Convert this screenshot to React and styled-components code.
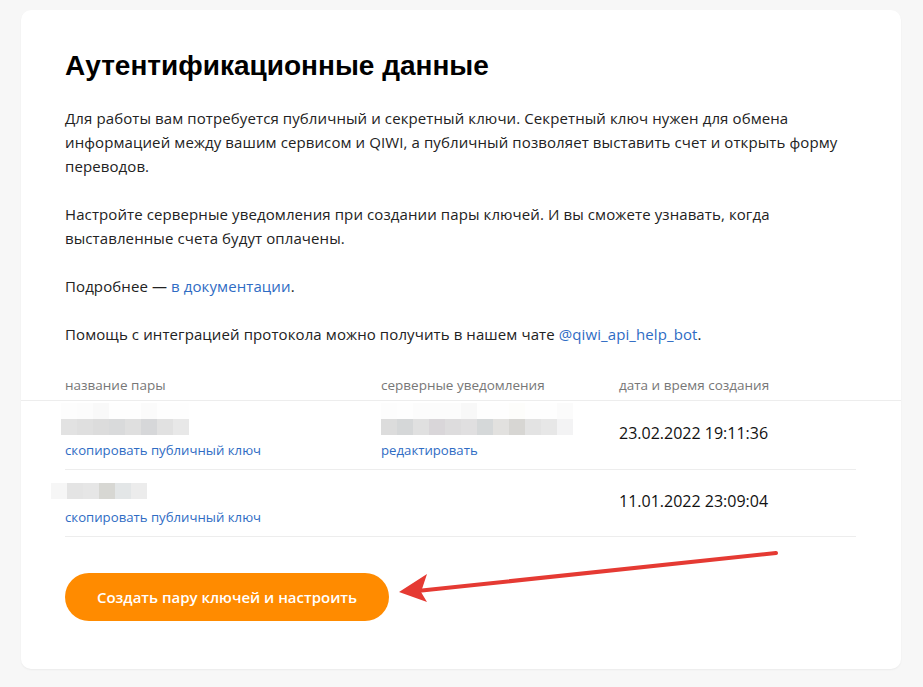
import React from "react";
import styled, { createGlobalStyle } from "styled-components";

const Global = createGlobalStyle`
  html, body { margin: 0; padding: 0; background: #f7f7f7; }
  body { font-family: "Open Sans", "Noto Sans", sans-serif; color: #1f1f1f; }
  * { box-sizing: border-box; }
`;

const Page = styled.div`
  padding: 10px 22px 18px 21px;
`;

const Card = styled.section`
  position: relative;
  background: #fff;
  border-radius: 10px;
  box-shadow: 0 1px 2px rgba(0,0,0,0.05);
  padding: 40px 0 47px;
  width: 880px;
  height: 659px;
`;

const Inner = styled.div`
  padding: 0 45px 0 44px;
`;

const Title = styled.h1`
  margin: 0 0 24px;
  font-family: "Liberation Sans", Arial, sans-serif;
  font-weight: 700;
  font-size: 28px;
  line-height: 32px;
  color: #000;
`;

const Text = styled.p`
  margin: 0 0 24px;
  font-size: 15px;
  line-height: 24px;
  color: #222;
  letter-spacing: 0.1px;
`;

const Link = styled.a`
  color: #2f6cc4;
  text-decoration: none;
`;

const HeadRow = styled.div`
  display: grid;
  grid-template-columns: 316px 238px 1fr;
  padding: 0 45px 0 44px;
  height: 31px;
  align-items: center;
  border-bottom: 1px solid #ededed;
`;

const HeadCell = styled.div`
  font-size: 13.5px;
  color: #777;
`;

const Rows = styled.div`
  padding: 0 45px 0 44px;
`;

const Row = styled.div`
  display: grid;
  grid-template-columns: 316px 238px 1fr;
  height: ${p => p.$h}px;
  border-bottom: 1px solid #ededed;
`;

const Cell = styled.div`
  display: flex;
  flex-direction: column;
  padding-top: ${p => p.$pt || 0}px;
`;

const DateCell = styled.div`
  display: flex;
  align-items: center;
  font-size: 16px;
  color: #111;
  padding-bottom: ${p => p.$pb || 0}px;
`;

const Pixels = styled.div`
  display: flex;
  margin-left: ${p => p.$ml || 0}px;
`;

const Px = styled.span`
  width: 16px;
  height: 16px;
  background: ${p => p.$c};
`;

const SmallLink = styled(Link)`
  font-size: 13.2px;
  line-height: 16px;
  margin-top: ${p => p.$mt || 0}px;
`;

const Footer = styled.div`
  padding: 36px 45px 0 44px;
`;

const Button = styled.button`
  height: 48px;
  width: 324px;
  border: none;
  border-radius: 24px;
  background: #ff8b00;
  color: #fff;
  font-family: "Open Sans", sans-serif;
  font-weight: 600;
  font-size: 15px;
  cursor: pointer;
`;

const Arrow = styled.svg`
  position: absolute;
  left: 0;
  top: 0;
  pointer-events: none;
`;

function PixelRow({ colors, ml }) {
  return (
    <Pixels $ml={ml}>
      {colors.map((c, i) => <Px key={i} $c={c} />)}
    </Pixels>
  );
}

export default function App() {
  return (
    <>
      <Global />
      <Page>
        <Card>
          <Inner>
            <Title>Аутентификационные данные</Title>
            <Text>
              Для работы вам потребуется публичный и секретный ключи. Секретный ключ нужен для обмена информацией между вашим сервисом и QIWI, а публичный позволяет выставить счет и открыть форму переводов.
            </Text>
            <Text>
              Настройте серверные уведомления при создании пары ключей. И вы сможете узнавать, когда выставленные счета будут оплачены.
            </Text>
            <Text>
              Подробнее — <Link href="#">в документации</Link>.
            </Text>
            <Text>
              Помощь с интеграцией протокола можно получить в нашем чате <Link href="#">@qiwi_api_help_bot</Link>.
            </Text>
          </Inner>
          <HeadRow>
            <HeadCell>название пары</HeadCell>
            <HeadCell>серверные уведомления</HeadCell>
            <HeadCell>дата и время создания</HeadCell>
          </HeadRow>
          <Rows>
            <Row $h={69}>
              <Cell $pt={2}>
                <PixelRow ml={-4} colors={["#fdfdfd", "#fcfcfc", "#f9f9f9", "#fefefe", "#fefefe", "#fbfbfb", "#fefefe", "#fefefe"]} />
                <PixelRow ml={-4} colors={["#e2e2e2", "#dfdfdf", "#dcdcdc", "#d9dadb", "#dfdfdf", "#d6d7d9", "#e1e1e1", "#e8e8e8"]} />
                <SmallLink href="#" $mt={7}>скопировать публичный ключ</SmallLink>
              </Cell>
              <Cell $pt={2}>
                <PixelRow colors={["#fdfdfd", "#fefefe", "#fcfcfc", "#fcfcfc", "#fcfcfc", "#f8f8f8", "#fefefe", "#fefefe", "#fdfdfb", "#fefefe", "#fefefe", "#fbfbfb"]} />
                <PixelRow colors={["#dcdcdc", "#d5d7d8", "#e0e0e0", "#d9d6d9", "#dddcdd", "#e0dfe0", "#d5d8d9", "#e2e1df", "#d7d6d3", "#e3e3e3", "#e7e7e7", "#f3f3f4"]} />
                <SmallLink href="#" $mt={7}>редактировать</SmallLink>
              </Cell>
              <DateCell $pb={4}>23.02.2022 19:11:36</DateCell>
            </Row>
            <Row $h={67}>
              <Cell $pt={13}>
                <PixelRow ml={-14} colors={["#f6f6f6", "#e4e4e4", "#e6e6e6", "#d7d7d3", "#e3e6e7", "#ececec"]} />
                <SmallLink href="#" $mt={10}>скопировать публичный ключ</SmallLink>
              </Cell>
              <Cell />
              <DateCell $pb={4}>11.01.2022 23:09:04</DateCell>
            </Row>
          </Rows>
          <Footer>
            <Button>Создать пару ключей и настроить</Button>
          </Footer>
          <Arrow width="880" height="659" viewBox="0 0 880 659">
            <line x1="755" y1="543" x2="396" y2="581" stroke="#e53a33" strokeWidth="4" strokeLinecap="round" />
            <polygon points="378,582 406,564 400,582 406,592" fill="#e53a33" />
          </Arrow>
        </Card>
      </Page>
    </>
  );
}
